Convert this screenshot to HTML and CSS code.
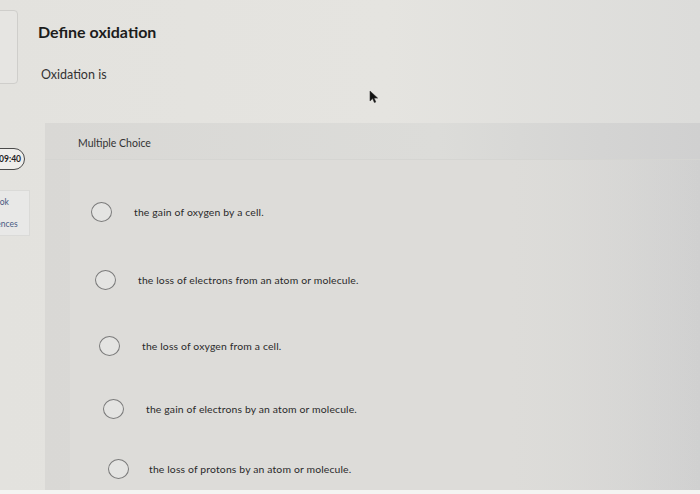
FILE: index.html
```html
<!DOCTYPE html>
<html lang="en">
<head>
<meta charset="utf-8">
<title>Define oxidation</title>
<link rel="stylesheet" href="styles.css">
</head>
<body>
<div class="page">
  <aside class="sidebar">
    <div class="side-box"></div>
    <div class="timer">09:40</div>
    <div class="links">
      <span>eBook</span>
      <span>References</span>
    </div>
  </aside>
  <main class="main">
    <h1 class="title">Define oxidation</h1>
    <p class="prompt">Oxidation is</p>
    <section class="card">
      <div class="card-head">Multiple Choice</div>
      <div class="options">
        <label class="opt r1"><span class="radio"></span><span class="txt">the gain of oxygen by a cell.</span></label>
        <label class="opt r2"><span class="radio"></span><span class="txt">the loss of electrons from an atom or molecule.</span></label>
        <label class="opt r3"><span class="radio"></span><span class="txt">the loss of oxygen from a cell.</span></label>
        <label class="opt r4"><span class="radio"></span><span class="txt">the gain of electrons by an atom or molecule.</span></label>
        <label class="opt r5"><span class="radio"></span><span class="txt">the loss of protons by an atom or molecule.</span></label>
      </div>
    </section>
  </main>
</div>
<svg class="cursor" width="10" height="14" viewBox="0 0 10 14"><path d="M1 1 L1 11 L3.6 8.6 L5.4 12.6 L6.8 12 L5.1 8.1 L8.6 8.1 Z" fill="#111" stroke="#333" stroke-width="0.6"/></svg>
</body>
</html>
```
FILE: styles.css
```css
html, body {
  margin: 0;
  padding: 0;
  height: 494px;
  overflow: hidden;
}
body {
  background: linear-gradient(to right, #e3e2de 0%, #e5e4e0 55%, #dcdcda 100%);
  font-family: Lato, "Open Sans", sans-serif;
  color: #2a2a2a;
  position: relative;
  border-bottom: 4px solid #f4f4f2;
  box-sizing: border-box;
}
.page {
  display: flex;
  height: 490px;
}
.sidebar {
  width: 30px;
  flex: none;
  overflow: hidden;
  display: flex;
  flex-direction: column;
  align-items: flex-end;
}
.side-box {
  width: 40px;
  height: 72px;
  margin-top: 10px;
  margin-right: 12px;
  border: 1px solid #cfcecb;
  border-radius: 4px;
  background: #e6e5e2;
  flex: none;
}
.timer {
  margin-top: 64px;
  margin-right: 5px;
  height: 22px;
  width: 48px;
  border: 1px solid #4a4a4a;
  border-radius: 12px;
  background: #efeeeb;
  font-size: 8.5px;
  font-weight: 700;
  color: #222;
  display: flex;
  align-items: center;
  justify-content: flex-end;
  padding-right: 3px;
  box-sizing: border-box;
  flex: none;
}
.links {
  margin-top: 20px;
  width: 60px;
  height: 46px;
  background: #e8e8e7;
  border: 1px solid #dadad8;
  box-sizing: border-box;
  display: flex;
  flex-direction: column;
  align-items: center;
  justify-content: space-around;
  padding-right: 6px;
  font-size: 8.5px;
  color: #4a5a82;
  white-space: nowrap;
  flex: none;
}
.main {
  flex: 1;
  display: flex;
  flex-direction: column;
  min-width: 0;
}
.title {
  margin: 22px 0 0 8px;
  font-size: 16px;
  line-height: 20px;
  font-weight: 700;
  color: #1c1c1c;
}
.prompt {
  margin: 25px 0 0 11px;
  font-size: 12.5px;
  line-height: 16px;
  color: #333;
}
.card {
  margin: 40px 0 0 15px;
  flex: 1;
  background: linear-gradient(to right, #d9d8d5 0%, #dcdcd9 60%, #d4d4d3 85%, #d0d0d0 100%);
  display: flex;
  flex-direction: column;
}
.card-head {
  height: 37px;
  padding-left: 33px;
  display: flex;
  align-items: center;
  padding-top: 3px;
  box-sizing: border-box;
  font-size: 10.5px;
  color: #333;
  border-bottom: 1px solid #d5d5d2;
}
.options {
  margin-left: 25px;
  padding-top: 19px;
  flex: 1;
  background: linear-gradient(to right, #dddcd9 0%, #dddcd9 70%, rgba(215,215,213,0) 100%);
  display: flex;
  flex-direction: column;
}
.opt {
  display: flex;
  align-items: center;
  flex: none;
}
.radio {
  width: 19px;
  height: 18px;
  border: 1.5px solid #7a7a7a;
  border-radius: 50%;
  flex: none;
  background: #e4e4e2;
}
.txt {
  font-size: 10.4px;
  letter-spacing: 0.15px;
  color: #2a2a2a;
  margin-left: 22px;
}
.r1 { height: 66px; padding-left: 21px; }
.r2 { height: 70px; padding-left: 25px; }
.r3 { height: 62px; padding-left: 29px; }
.r4 { height: 64px; padding-left: 33px; }
.r5 { height: 56px; padding-left: 38px; }
.r5 .txt { margin-left: 20px; }
.cursor {
  position: absolute;
  left: 369px;
  top: 90px;
}
```
